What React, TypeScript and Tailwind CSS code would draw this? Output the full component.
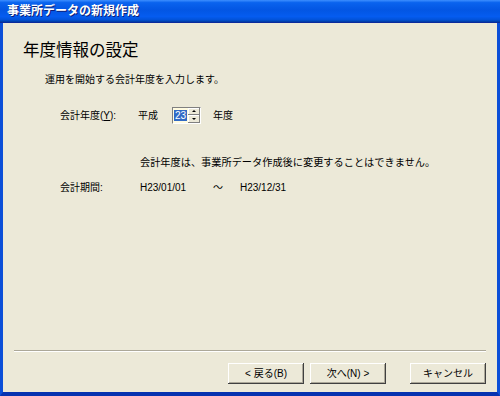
const font = "font-['Liberation_Sans','Noto_Sans_CJK_JP',sans-serif]";

const XpButton = ({ label, className = "" }: { label: string; className?: string }) => (
  <button
    className={`h-[21px] w-[76px] bg-[#ece9d8] text-[10px] text-black shadow-[inset_-1px_-1px_0_#404040,inset_1px_1px_0_#ffffff,inset_-2px_-2px_0_#aca899] ${className}`}
  >
    {label}
  </button>
);

const Spinner = () => (
  <div className="flex h-[17px] w-[29px] border-t border-l border-[#808080] border-r border-b border-r-white border-b-white bg-[#fffbe0]">
    <div className="flex flex-1 items-center pl-[1px]">
      <span className="bg-[#316ac5] px-[1px] text-[10px] leading-[11px] text-white">23</span>
    </div>
    <div className="flex w-[12px] flex-col">
      <div className="flex flex-1 items-center justify-center bg-[#ece9d8] shadow-[inset_-1px_-1px_0_#808080,inset_1px_1px_0_#ffffff]">
        <div className="h-0 w-0 border-x-[2px] border-b-[2px] border-x-transparent border-b-black" />
      </div>
      <div className="flex flex-1 items-center justify-center bg-[#ece9d8] shadow-[inset_-1px_-1px_0_#808080,inset_1px_1px_0_#ffffff]">
        <div className="h-0 w-0 border-x-[2px] border-t-[2px] border-x-transparent border-t-black" />
      </div>
    </div>
  </div>
);

export default function App() {
  return (
    <div className={`flex h-[396px] w-[500px] flex-col ${font} text-black`}>
      {/* title bar */}
      <div className="flex h-[23px] items-center border-b border-[#0a2a9c] bg-[linear-gradient(180deg,#3d8fff_0%,#0a63ee_12%,#0356e3_45%,#055cf0_75%,#0252d8_90%,#003a9e_100%)] pl-[7px]">
        <span className="text-[12px] font-bold leading-none text-white [text-shadow:1px_1px_0_#0c1f7a]">
          事業所データの新規作成
        </span>
      </div>

      {/* body */}
      <div className="flex flex-1 flex-col border-x-[3px] border-b-[4px] border-x-[#0b4fd8] border-b-[#0632b0] bg-[#ece9d8]">
        <h1 className="pl-[20px] pt-[17px] text-[16.5px] font-normal leading-[20px]">年度情報の設定</h1>

        <p className="mt-[13px] pl-[42px] text-[10px] leading-[14px]">運用を開始する会計年度を入力します。</p>

        <div className="mt-[19px] flex h-[18px] items-center pl-[57px] text-[10px]">
          <span className="w-[78px]">
            会計年度(<span className="underline">Y</span>):
          </span>
          <span className="w-[34px]">平成</span>
          <Spinner />
          <span className="ml-[12px]">年度</span>
        </div>

        <p className="mt-[32px] pl-[137px] text-[10.2px] leading-[14px]">
          会計年度は、事業所データ作成後に変更することはできません。
        </p>

        <div className="mt-[10px] flex h-[14px] items-center pl-[57px] text-[10px]">
          <span className="w-[80px]">会計期間:</span>
          <span className="w-[73px]">H23/01/01</span>
          <span className="w-[27px]">～</span>
          <span>H23/12/31</span>
        </div>

        {/* footer */}
        <div className="mt-auto px-[11px]">
          <div className="h-[2px] border-t border-[#aca899] border-b border-b-white" />
        </div>
        <div className="flex items-center pb-[8px] pl-[225px] pt-[11px]">
          <XpButton label="< 戻る(B)" />
          <XpButton label="次へ(N) >" className="ml-[6px]" />
          <XpButton label="キャンセル" className="ml-[24px]" />
        </div>
      </div>
    </div>
  );
}
